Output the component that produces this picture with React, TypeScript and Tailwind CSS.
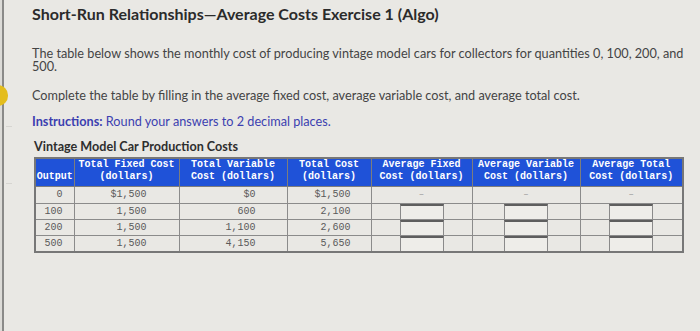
// Average-cost exercise: prompt text plus the production cost table
// with blank answer boxes in the three "average" columns.

const ROWS = [
  { q: "0", fixed: "$1,500", variable: "$0", total: "$1,500", first: true },
  { q: "100", fixed: "1,500", variable: "600", total: "2,100" },
  { q: "200", fixed: "1,500", variable: "1,100", total: "2,600" },
  { q: "500", fixed: "1,500", variable: "4,150", total: "5,650" },
];

const ROW_H = ["h-[14px]", "h-[16px]", "h-[16px]", "h-[16px]"];

export default function App() {
  return (
    <div
      className="relative w-[700px] h-[331px] overflow-hidden flex bg-[#e9e8e4] text-[#3a3a3a]"
      style={{ fontFamily: "Lato, 'Open Sans', sans-serif" }}
    >
      <SideRail />

      <div className="flex-1 pl-[28px] pt-[4px]">
        <h1 className="text-[16px] font-bold text-[#2b2b2b] leading-[20px]">
          Short-Run Relationships—Average Costs Exercise 1 (Algo)
        </h1>

        <p className="mt-[23px] text-[12.7px] leading-[12.5px] w-[662px] text-[#444]">
          The table below shows the monthly cost of producing vintage model cars
          for collectors for quantities 0, 100, 200, and 500.
        </p>

        <p className="mt-[16px] text-[12.7px] leading-[14px] text-[#444]">
          Complete the table by filling in the average fixed cost, average
          variable cost, and average total cost.
        </p>

        <p className="mt-[12px] text-[12.7px] leading-[14px] text-[#3c3fb0]">
          <span className="font-bold">Instructions:</span> Round your answers to
          2 decimal places.
        </p>

        <h2 className="mt-[12px] ml-[2px] text-[12.6px] font-bold leading-[14px] text-[#2e2e2e]">
          Vintage Model Car Production Costs
        </h2>

        <CostTable />
      </div>
    </div>
  );
}

function SideRail() {
  return (
    <div className="relative w-[4px] h-full bg-[#dcdbd7] border-r-2 border-[#8a8a88]">
      <span className="absolute left-[-12px] top-[85px] w-[20px] h-[21px] rounded-full bg-[#e4bd1c]" />
      <span className="absolute left-[6px] top-[126px] w-[6px] h-[58px] border-y border-[#d6d5d1]" />
    </div>
  );
}

function CostTable() {
  const th =
    "border border-[#7d7d7d] bg-[#1f52d8] text-white font-bold text-[10px] leading-[12px] text-center align-bottom pb-[3px]";
  const cell = "border border-[#8b8b8b] p-0 text-[10px] text-[#5a5a5a]";
  const num = `${cell} text-right`;
  const avg = `${cell} text-center`;
  return (
    <table
      className="ml-[2px] mt-[3px] border-collapse border-2 border-[#777] table-fixed w-[648px]"
      style={{ fontFamily: "'Liberation Mono', 'Courier New', monospace" }}
    >
      <colgroup>
        <col className="w-[39px]" />
        <col className="w-[105px]" />
        <col className="w-[108px]" />
        <col className="w-[84px]" />
        <col className="w-[101px]" />
        <col className="w-[108px]" />
        <col className="w-[103px]" />
      </colgroup>
      <thead>
        <tr className="h-[24px]">
          <th className={th}>Output</th>
          <th className={th}>
            Total Fixed Cost
            <br />
            (dollars)
          </th>
          <th className={th}>
            Total Variable
            <br />
            Cost (dollars)
          </th>
          <th className={th}>
            Total Cost
            <br />
            (dollars)
          </th>
          <th className={th}>
            Average Fixed
            <br />
            Cost (dollars)
          </th>
          <th className={th}>
            Average Variable
            <br />
            Cost (dollars)
          </th>
          <th className={th}>
            Average Total
            <br />
            Cost (dollars)
          </th>
        </tr>
      </thead>
      <tbody>
        {ROWS.map((r, i) => (
          <tr key={r.q} className={ROW_H[i]}>
            <td className={`${num} pr-[11px]`}>{r.q}</td>
            <td className={`${num} pr-[32px]`}>{r.fixed}</td>
            <td className={`${num} pr-[31px]`}>{r.variable}</td>
            <td className={`${num} pr-[20px]`}>{r.total}</td>
            {[0, 1, 2].map((c) => (
              <td key={c} className={avg}>
                {r.first ? (
                  <span className="text-[#9a9a9a] text-[9px]">–</span>
                ) : (
                  <AnswerBox />
                )}
              </td>
            ))}
          </tr>
        ))}
      </tbody>
    </table>
  );
}

function AnswerBox() {
  return (
    <div className="mx-auto w-[44px] h-full min-h-[15px] bg-[#eeede9] border-x border-[#8a8a8a] border-t-2 border-t-[#5e5e5e]" />
  );
}
